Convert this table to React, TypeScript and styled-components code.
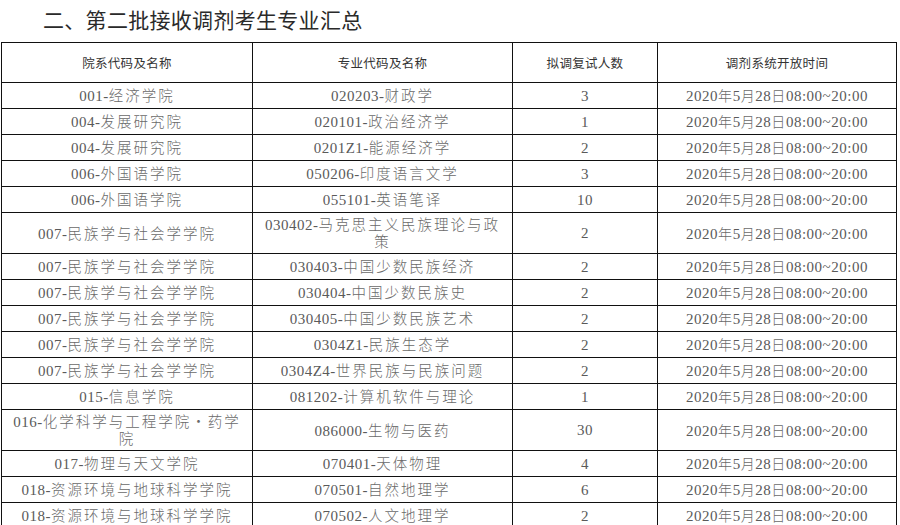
import React from "react";
import styled, { createGlobalStyle } from "styled-components";

const Global = createGlobalStyle`
  html, body { margin: 0; padding: 0; background: #fff; }
  body { overflow: hidden; }
`;

const Page = styled.div`
  width: 900px;
  height: 525px;
  overflow: hidden;
  background: #fff;
  position: relative;
`;

const Title = styled.h2`
  margin: 0;
  padding: 5px 0 0 43px;
  height: 42px;
  box-sizing: border-box;
  font-family: "Noto Sans CJK SC", "Noto Sans", sans-serif;
  font-weight: 400;
  font-size: 21px;
  line-height: 28px;
  color: #2a2a2a;
  letter-spacing: 0.3px;
`;

const Table = styled.table`
  margin-left: 1px;
  border-collapse: collapse;
  table-layout: fixed;
  width: 895px;
`;

const HeadCell = styled.th`
  border: 1px solid #111;
  height: 39px;
  padding: 0;
  font-family: "Noto Sans CJK SC", sans-serif;
  font-weight: 400;
  font-size: 12.5px;
  color: #333;
  text-align: center;
  vertical-align: middle;
  letter-spacing: 0.3px;
`;

const Cell = styled.td<{ $tall?: boolean }>`
  border: 1px solid #111;
  height: ${(p) => (p.$tall ? "40px" : "25px")};
  padding: 0 6px;
  font-family: "Liberation Serif", "Noto Sans CJK SC", serif;
  font-size: 15px;
  line-height: 16px;
  color: #5a5a5a;
  text-align: center;
  vertical-align: middle;
  letter-spacing: 0.5px;
  word-break: break-all;
`;

const Zh = styled.span`
  font-family: "Noto Sans CJK SC", sans-serif;
  font-weight: 300;
  color: #6a6a6a;
  font-size: 14.5px;
  letter-spacing: 2px;
`;

const DateZh = styled(Zh)`
  letter-spacing: 0.6px;
  font-size: 14px;
`;

type Row = { dept: string; major: string; n: string; tall?: boolean };

const rows: Row[] = [
  { dept: "001-经济学院", major: "020203-财政学", n: "3" },
  { dept: "004-发展研究院", major: "020101-政治经济学", n: "1" },
  { dept: "004-发展研究院", major: "0201Z1-能源经济学", n: "2" },
  { dept: "006-外国语学院", major: "050206-印度语言文学", n: "3" },
  { dept: "006-外国语学院", major: "055101-英语笔译", n: "10" },
  { dept: "007-民族学与社会学学院", major: "030402-马克思主义民族理论与政策", n: "2", tall: true },
  { dept: "007-民族学与社会学学院", major: "030403-中国少数民族经济", n: "2" },
  { dept: "007-民族学与社会学学院", major: "030404-中国少数民族史", n: "2" },
  { dept: "007-民族学与社会学学院", major: "030405-中国少数民族艺术", n: "2" },
  { dept: "007-民族学与社会学学院", major: "0304Z1-民族生态学", n: "2" },
  { dept: "007-民族学与社会学学院", major: "0304Z4-世界民族与民族问题", n: "2" },
  { dept: "015-信息学院", major: "081202-计算机软件与理论", n: "1" },
  { dept: "016-化学科学与工程学院·药学院", major: "086000-生物与医药", n: "30", tall: true },
  { dept: "017-物理与天文学院", major: "070401-天体物理", n: "4" },
  { dept: "018-资源环境与地球科学学院", major: "070501-自然地理学", n: "6" },
  { dept: "018-资源环境与地球科学学院", major: "070502-人文地理学", n: "2" },
];

const zhRe = /([\u3000-\u9fff\uff00-\uffef·]+)/;

function Mixed({ text, date }: { text: string; date?: boolean }) {
  const parts = text.split(zhRe).filter(Boolean);
  const Z = date ? DateZh : Zh;
  return (
    <>
      {parts.map((p, i) =>
        zhRe.test(p) ? <Z key={i}>{p}</Z> : <React.Fragment key={i}>{p}</React.Fragment>
      )}
    </>
  );
}

export default function App() {
  return (
    <Page>
      <Global />
      <Title>二、第二批接收调剂考生专业汇总</Title>
      <Table>
        <colgroup>
          <col style={{ width: 251 }} />
          <col style={{ width: 260 }} />
          <col style={{ width: 145 }} />
          <col style={{ width: 239 }} />
        </colgroup>
        <thead>
          <tr>
            <HeadCell>院系代码及名称</HeadCell>
            <HeadCell>专业代码及名称</HeadCell>
            <HeadCell>拟调复试人数</HeadCell>
            <HeadCell>调剂系统开放时间</HeadCell>
          </tr>
        </thead>
        <tbody>
          {rows.map((r, i) => (
            <tr key={i}>
              <Cell $tall={r.tall}><Mixed text={r.dept} /></Cell>
              <Cell $tall={r.tall}><Mixed text={r.major} /></Cell>
              <Cell $tall={r.tall}>{r.n}</Cell>
              <Cell $tall={r.tall}><Mixed text="2020年5月28日08:00~20:00" date /></Cell>
            </tr>
          ))}
        </tbody>
      </Table>
    </Page>
  );
}
